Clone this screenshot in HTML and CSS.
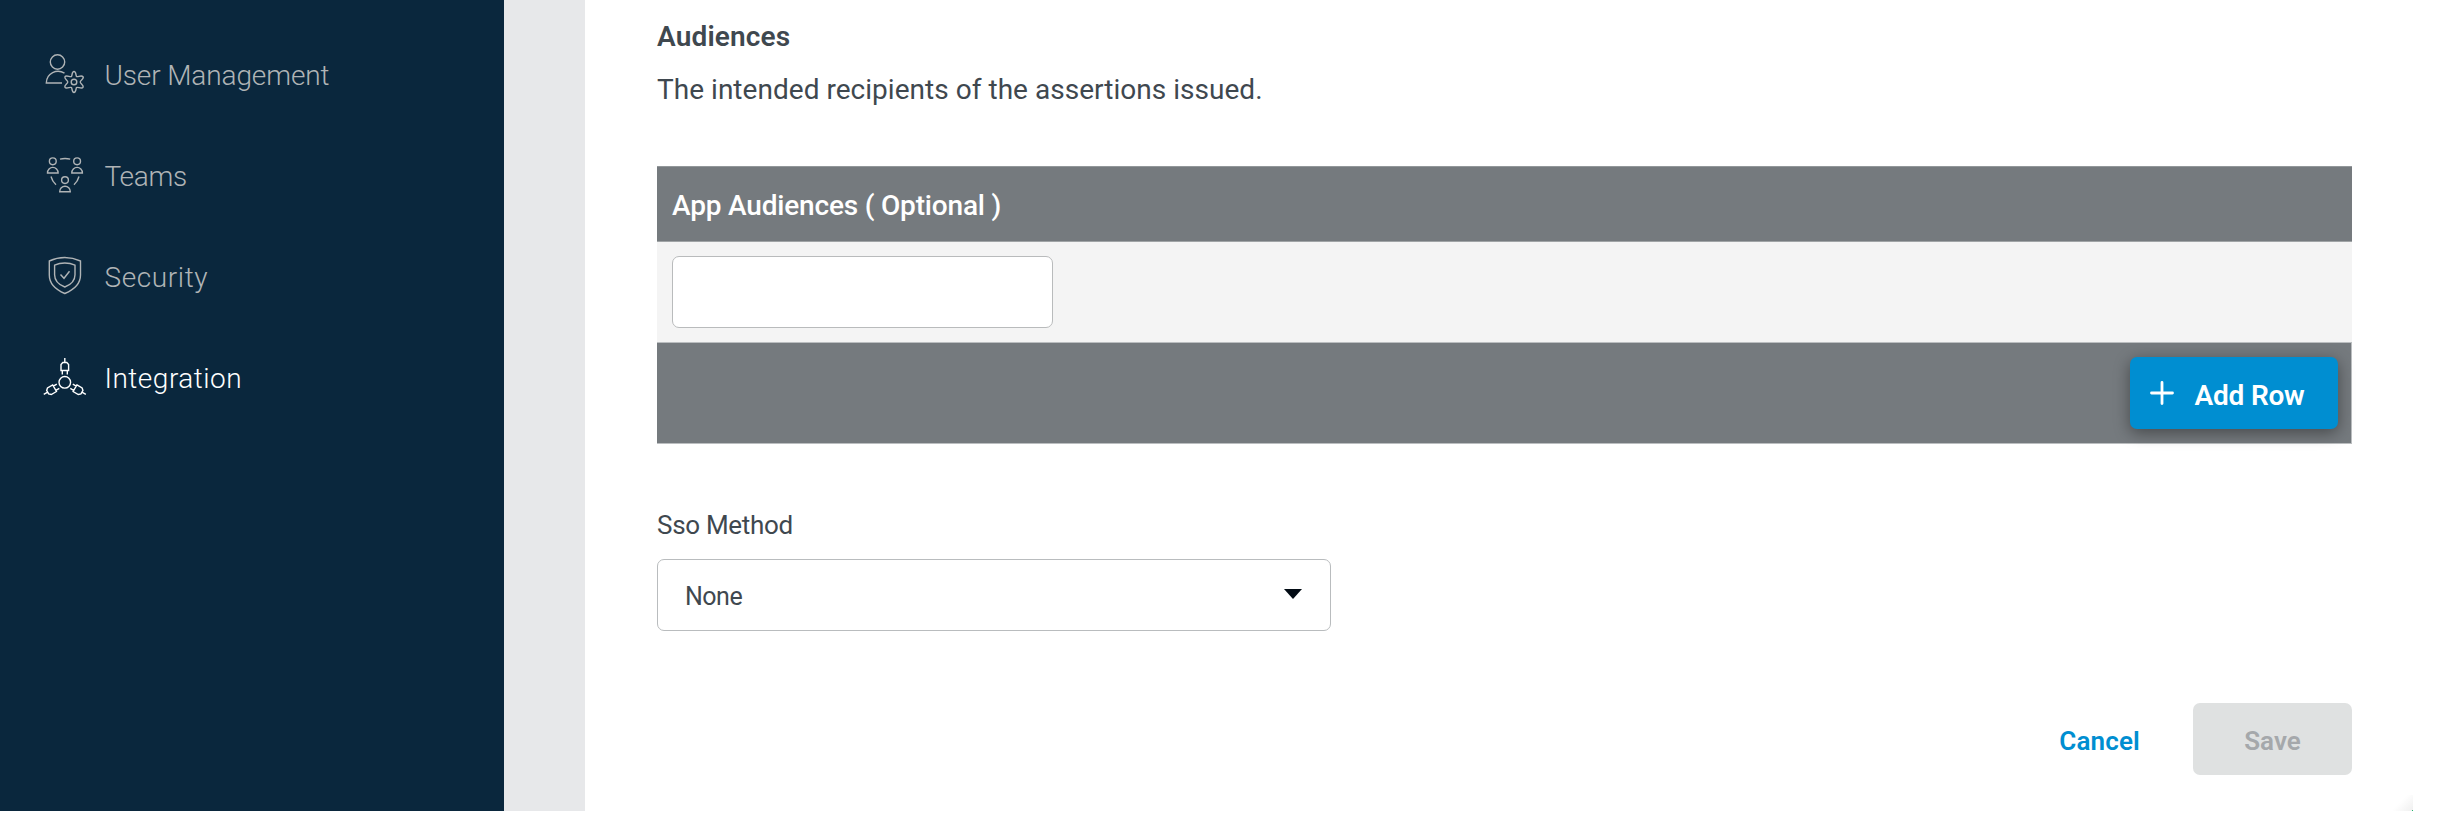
FILE: index.html
```html
<!DOCTYPE html>
<html lang="en">
<head>
<meta charset="utf-8">
<title>Integration</title>
<link rel="stylesheet" href="styles.css">
</head>
<body>
<div class="app">
  <nav class="sidebar">
    <a class="nav-item"><svg class="nav-icon" viewBox="0 0 48 48"><circle cx="17.500" cy="12" r="7.200"/><path d="M24.500 23.200C17 18.500 6.500 23 6.300 33H22"/><circle cx="34" cy="32" r="2.800"/><path id="gear" d="M31.500 26.500C32.300 25 31.800 21.500 34 21.500S35.700 25 36.500 26.500C37.700 27.300 41.500 24.800 43 26.700S40.500 30 40.200 32C40.500 34 44.100 35.300 43 37.300S37.700 36.700 36.500 37.500C35.700 39 36.200 42.500 34 42.500S32.300 39 31.500 37.500C30.300 36.700 26.100 39.200 25 37.300S27.500 34 27.800 32C27.500 30 23.900 28.700 25 26.700S30.300 27.300 31.500 26.500Z"/></svg><span class="nav-label user">User Management</span></a>
    <a class="nav-item"><svg class="nav-icon" viewBox="0 0 48 48"><g id="person"><circle cx="12.800" cy="10.300" r="3.400"/><path d="M7.500 22a5.300 5.600 0 0 1 10.600 0z"/></g><use href="#person" x="24.300"/><use href="#person" x="12.200" y="18.800"/><path d="M20 8.200q5-1.500 10.200 0M11 25.500q1.300 5 5 8.200M39 25.500q-1.300 5-5 8.200"/></svg><span class="nav-label teams">Teams</span></a>
    <a class="nav-item"><svg class="nav-icon" viewBox="0 0 48 48"><path d="M24.800 5.500q8 0 15.700 3.500v14q0 12-15.700 18.500Q9.300 35 9.300 23V9q7.500-3.500 15.500-3.500z"/><path d="M24.800 11q5.500 0 10.200 2.200v9.500q0 8.300-10.200 12.300q-10.200-4-10.200-12.300v-9.500Q19.300 11 24.800 11zM20.500 22.500l3.500 3.800 5.500-7"/></svg><span class="nav-label security">Security</span></a>
    <a class="nav-item active"><svg class="nav-icon" viewBox="0 0 48 48"><circle cx="24.800" cy="29.300" r="5.800"/><g id="plug"><path d="M24.800 5v4.500M21 17.500v-6l1.800-2h4l1.800 2v6zM22.300 17.500v4M27.300 17.500v4"/></g><use href="#plug" transform="rotate(120 24.800 29.300)"/><use href="#plug" transform="rotate(240 24.800 29.300)"/></svg><span class="nav-label integration">Integration</span></a>
  </nav>
  <div class="gutter"></div>
  <main class="content">
    <h2 class="title"><span>Audiences</span></h2>
    <p class="description"><span>The intended recipients of the assertions issued.</span></p>
    <section class="table">
      <div class="table-head"><span>App Audiences ( Optional )</span></div>
      <div class="table-body"><input class="audience-input" type="text" aria-label="App audience"></div>
      <div class="table-foot"><button class="add-row"><svg class="plus" viewBox="0 0 24 24"><path d="M12 1.500v21M1.500 12h21"/></svg><span>Add Row</span></button></div>
    </section>
    <div class="method-label"><span>Sso Method</span></div>
    <div class="select"><span>None</span><svg class="caret" viewBox="0 0 18 10"><path d="M0 0h18L9 10z"/></svg></div>
    <footer class="actions"><button class="cancel">Cancel</button><button class="save" disabled>Save</button></footer>
    <div class="corner"></div>
  </main>
</div>
</body>
</html>
```
FILE: styles.css
```css
* { box-sizing: border-box; }
body { margin: 0; background: #fff; font-family: Roboto, "Liberation Sans", sans-serif; font-size: 28px; color: #3f484f; }
button { font: inherit; border: 0; padding: 0; }
.app { display: flex; height: 811px; }
.sidebar { width: 504px; background: #0a273d; padding: 24px 0 0 40px; flex: none; }
.nav-item { display: flex; align-items: center; height: 100.8px; color: #b0b4b6; }
.nav-icon { width: 48px; height: 48px; fill: none; stroke: currentColor; stroke-width: 1.4; margin-right: 16.500px; flex: none; }
.nav-label { font-weight: 300; padding-top: 3px; }
.user { letter-spacing: -0.12px; }
.teams { letter-spacing: -0.3px; }
.security { letter-spacing: 0.6px; }
.integration { letter-spacing: 0.5px; }
.active { color: #fff; }
.gutter { width: 81px; background: #e7e8ea; flex: none; }
.content { position: relative; width: 1828px; padding: 0 61px 0 72px; }
.title { margin: 0; font-size: 28px; font-weight: 600; line-height: 40px; padding-top: 17px; letter-spacing: 0.15px; }
.description { margin: 0; line-height: 40px; padding-top: 13px; letter-spacing: 0.03px; }
.table { margin-top: 56px; }
.table-head { height: 76px; border-top: 1px solid #92979a; border-bottom: 1px solid #a0a4a6; background: #757a7e; color: #fff; font-weight: 500; display: flex; align-items: center; padding: 3px 0 0 15px; letter-spacing: -0.18px; }
.table-body { height: 100px; background: #f4f4f4; padding: 14px 15px; }
.audience-input { display: block; width: 381px; height: 72px; border: 1px solid #b9bbbc; border-radius: 7px; background: #fff; }
.table-foot { height: 102px; border: solid #bbbec0; border-width: 1px 1px 1px 0; background: #757a7e; display: flex; justify-content: flex-end; padding: 14px 13px; }
.add-row { width: 208px; height: 72px; border-radius: 7px; background: #008ed1; color: #fff; font-weight: 600; display: flex; align-items: center; padding: 4px 0 0 20px; box-shadow: 0 4px 16px #0006; letter-spacing: -0.2px; }
.plus { width: 24px; height: 24px; margin-right: 20.500px; margin-top: -5px; stroke: #fff; stroke-width: 2.8; stroke-linecap: round; }
.method-label { font-size: 26px; line-height: 40px; margin-top: 61px; letter-spacing: -0.3px; }
.select { margin-top: 14px; width: 674px; height: 72px; border: 1px solid #b9bcbe; border-radius: 7px; display: flex; align-items: center; justify-content: space-between; padding: 2px 28px 0 27px; font-size: 25px; letter-spacing: -0.5px; }
.caret { width: 18px; height: 10px; margin-top: -5px; fill: #020b14; }
.actions { margin-top: 72px; display: flex; justify-content: flex-end; font-size: 26px; font-weight: 600; }
.cancel { background: none; color: #008ed1; margin-right: 53px; padding-top: 3px; letter-spacing: 0.15px; }
.save { width: 159px; height: 72px; border-radius: 7px; background: #dfe1e1; color: #a5a8ab; padding-top: 3px; }
/* faint shadow of the chat launcher entering at the lower right */
.corner { position: absolute; right: 0; bottom: 0; width: 20px; height: 16px; background: linear-gradient(135deg, #fff 40%, #efefef); }
.corner::after { content: ""; position: absolute; right: 0; bottom: 0; width: 1px; height: 1px; background: #1bb66a; }
```
